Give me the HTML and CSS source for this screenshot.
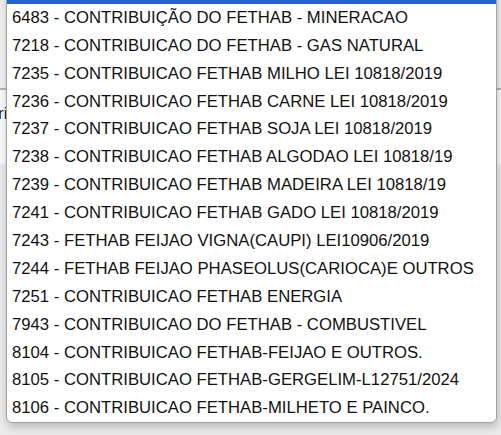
FILE: index.html
```html
<!DOCTYPE html>
<html lang="pt-BR">

<head>
    <meta charset="UTF-8">
    <meta name="viewport" content="width=device-width, initial-scale=1.0">
    <title>Receita</title>
    <link rel="stylesheet" href="styles.css">
</head>

<body>
    <div class="page">
        <div class="toolbar"></div>
        <div class="content">
            <span class="label">ri</span>
        </div>

        <ul class="dropdown">
            <li class="selected">6482 - CONTRIBUICAO DO FETHAB</li>
            <li>6483 - CONTRIBUIÇÃO DO FETHAB - MINERACAO</li>
            <li>7218 - CONTRIBUICAO DO FETHAB - GAS NATURAL</li>
            <li>7235 - CONTRIBUICAO FETHAB MILHO LEI 10818/2019</li>
            <li>7236 - CONTRIBUICAO FETHAB CARNE LEI 10818/2019</li>
            <li>7237 - CONTRIBUICAO FETHAB SOJA LEI 10818/2019</li>
            <li>7238 - CONTRIBUICAO FETHAB ALGODAO LEI 10818/19</li>
            <li>7239 - CONTRIBUICAO FETHAB MADEIRA LEI 10818/19</li>
            <li>7241 - CONTRIBUICAO FETHAB GADO LEI 10818/2019</li>
            <li>7243 - FETHAB FEIJAO VIGNA(CAUPI) LEI10906/2019</li>
            <li>7244 - FETHAB FEIJAO PHASEOLUS(CARIOCA)E OUTROS</li>
            <li>7251 - CONTRIBUICAO FETHAB ENERGIA</li>
            <li>7943 - CONTRIBUICAO DO FETHAB - COMBUSTIVEL</li>
            <li>8104 - CONTRIBUICAO FETHAB-FEIJAO E OUTROS.</li>
            <li>8105 - CONTRIBUICAO FETHAB-GERGELIM-L12751/2024</li>
            <li>8106 - CONTRIBUICAO FETHAB-MILHETO E PAINCO.</li>
        </ul>
    </div>
</body>

</html>
```

FILE: styles.css
```css
body {
    font-family: "Liberation Sans", Arial, sans-serif;
    margin: 0;
    padding: 0;
    background-color: #ececec;
    overflow: hidden;
}

.page {
    position: relative;
    height: 435px;
}

.toolbar {
    height: 88px;
    background-color: #f0f0f0;
    border-bottom: 2px solid #b4b4b4;
}

.content {
    background-color: #fafafa;
    height: 60px;
    padding-top: 14px;
}

.label {
    font-size: 17px;
    color: #222;
    margin-left: -2px;
}

.dropdown {
    position: absolute;
    left: 6px;
    top: -25px;
    width: 489px;
    margin: 0;
    padding: 0;
    list-style: none;
    background-color: #ffffff;
    border: 1px solid #a0a0a0;
    border-radius: 6px;
    box-shadow: 1px 4px 10px rgba(0, 0, 0, 0.22);
}

.dropdown li {
    height: 27.9px;
    line-height: 28.8px;
    padding-left: 5px;
    font-size: 16.7px;
    color: #111;
    white-space: nowrap;
}

.dropdown li.selected {
    background-color: #2163d0;
    color: #fff;
}
```
